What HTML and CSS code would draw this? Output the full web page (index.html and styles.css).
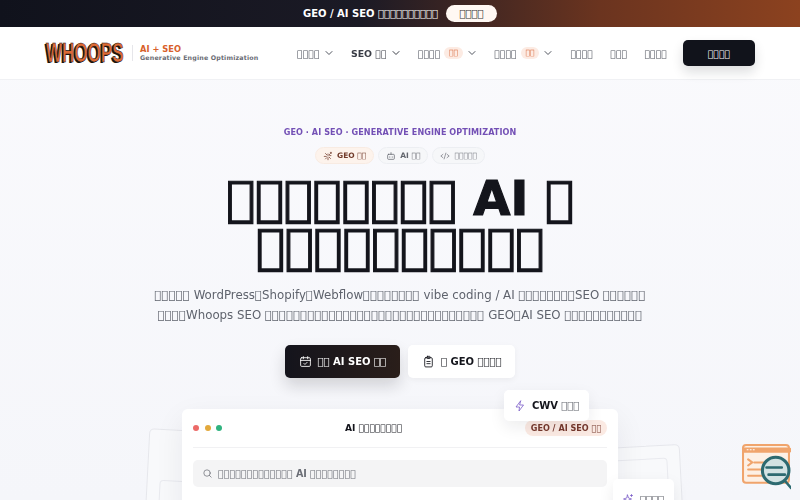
FILE: index.html
```html
<!DOCTYPE html>
<html lang="zh-Hant">
<head>
  <meta charset="UTF-8">
  <title>Whoops SEO</title>
  <link rel="stylesheet" href="styles.css">
</head>
<body>

  <div class="promo">
    <span class="promo-text">GEO / AI SEO &#xE000;&#xE000;&#xE000;&#xE000;&#xE000;&#xE000;&#xE000;&#xE000;&#xE000;&#xE000;</span>
    <span class="promo-btn">&#xE000;&#xE000;&#xE000;&#xE000;</span>
  </div>

  <header class="site-header">
    <div class="brand">
      <div class="wordmark-box"><span class="wordmark">WHOOPS</span></div>
      <span class="brand-line"></span>
      <div class="brand-text">
        <div class="brand-top">AI + SEO</div>
        <div class="brand-sub">Generative Engine Optimization</div>
      </div>
    </div>
    <nav class="main-nav">
      <a>&#xE000;&#xE000;&#xE000;&#xE000;<svg class="chev" viewBox="0 0 10 10"><path d="M2 3.5 5 6.5 8 3.5"/></svg></a>
      <a class="active">SEO &#xE000;&#xE000;<svg class="chev" viewBox="0 0 10 10"><path d="M2 3.5 5 6.5 8 3.5"/></svg></a>
      <a>&#xE000;&#xE000;&#xE000;&#xE000;<span class="tag">&#xE000;&#xE000;</span><svg class="chev" viewBox="0 0 10 10"><path d="M2 3.5 5 6.5 8 3.5"/></svg></a>
      <a>&#xE000;&#xE000;&#xE000;&#xE000;<span class="tag">&#xE000;&#xE000;</span><svg class="chev" viewBox="0 0 10 10"><path d="M2 3.5 5 6.5 8 3.5"/></svg></a>
      <a>&#xE000;&#xE000;&#xE000;&#xE000;</a>
      <a>&#xE000;&#xE000;&#xE000;</a>
      <a>&#xE000;&#xE000;&#xE000;&#xE000;</a>
    </nav>
    <a class="cta">&#xE000;&#xE000;&#xE000;&#xE000;</a>
  </header>

  <main class="hero">
    <div class="eyebrow">GEO · AI SEO · Generative Engine Optimization</div>

    <div class="pills">
      <span class="pill pill-geo">
        <svg viewBox="0 0 24 24"><path d="M12 7v5M12 16v5M3 13h5M16 11h3M6 6l3 3M15 15l3 3M15 9l2-2M9 16l-3 3M19 3v3M17.5 4.5h3"/></svg>
        <span>GEO &#xE000;&#xE000;</span>
      </span>
      <span class="pill">
        <svg viewBox="0 0 24 24"><rect x="4" y="8" width="16" height="12" rx="2"/><path d="M12 8V4M9 14v1M15 14v1"/></svg>
        <span>AI &#xE000;&#xE000;</span>
      </span>
      <span class="pill pill-light">
        <svg viewBox="0 0 24 24"><path d="M7 8l-5 4 5 4M17 8l5 4-5 4M14 5l-4 14"/></svg>
        <span>&#xE000;&#xE000;&#xE000;&#xE000;&#xE000;</span>
      </span>
    </div>

    <h1>&#xE000;&#xE000;&#xE000;&#xE000;&#xE000;&#xE000;&#xE000;&#xE000; AI &#xE000;<br>&#xE000;&#xE000;&#xE000;&#xE000;&#xE000;&#xE000;&#xE000;&#xE000;&#xE000;&#xE000;</h1>

    <p class="lead">&#xE000;&#xE000;&#xE000;&#xE000;&#xE000; WordPress&#xE000;Shopify&#xE000;Webflow&#xE000;&#xE000;&#xE000;&#xE000;&#xE000;&#xE000;&#xE000;&#xE000; vibe coding / AI &#xE000;&#xE000;&#xE000;&#xE000;&#xE000;&#xE000;&#xE000;&#xE000;SEO &#xE000;&#xE000;&#xE000;&#xE000;&#xE000;&#xE000;<br>&#xE000;&#xE000;&#xE000;&#xE000;Whoops SEO &#xE000;&#xE000;&#xE000;&#xE000;&#xE000;&#xE000;&#xE000;&#xE000;&#xE000;&#xE000;&#xE000;&#xE000;&#xE000;&#xE000;&#xE000;&#xE000;&#xE000;&#xE000;&#xE000;&#xE000;&#xE000;&#xE000;&#xE000;&#xE000;&#xE000;&#xE000;&#xE000;&#xE000;&#xE000;&#xE000;&#xE000; GEO&#xE000;AI SEO &#xE000;&#xE000;&#xE000;&#xE000;&#xE000;&#xE000;&#xE000;&#xE000;&#xE000;&#xE000;&#xE000;</p>

    <div class="actions">
      <a class="btn btn-dark">
        <svg viewBox="0 0 24 24"><rect x="3" y="5" width="18" height="16" rx="2"/><path d="M8 3v4M16 3v4M3 10h18M9 15.5l2 2 4-4"/></svg>
        <span>&#xE000;&#xE000; AI SEO &#xE000;&#xE000;</span>
      </a>
      <a class="btn btn-white">
        <svg viewBox="0 0 24 24"><rect x="5" y="5" width="14" height="17" rx="2"/><rect x="9" y="2.5" width="6" height="4" rx="1"/><path d="M9 12h6M9 16h6"/></svg>
        <span>&#xE000; GEO &#xE000;&#xE000;&#xE000;&#xE000;</span>
      </a>
    </div>

    <div class="stage">
      <div class="ghost ghost-left"><div class="ghost-inner"></div></div>
      <div class="ghost ghost-right"><div class="ghost-inner"></div></div>

      <section class="window">
        <div class="window-bar">
          <div class="dots"><i class="red"></i><i class="amber"></i><i class="green"></i></div>
          <div class="window-title">AI &#xE000;&#xE000;&#xE000;&#xE000;&#xE000;&#xE000;&#xE000;&#xE000;</div>
          <span class="window-badge">GEO / AI SEO &#xE000;&#xE000;</span>
        </div>
        <div class="search">
          <svg viewBox="0 0 24 24"><circle cx="11" cy="11" r="7"/><path d="M20 20l-4-4"/></svg>
          <span>&#xE000;&#xE000;&#xE000;&#xE000;&#xE000;&#xE000;&#xE000;&#xE000;&#xE000;&#xE000;&#xE000;&#xE000;&#xE000; <b>AI</b> &#xE000;&#xE000;&#xE000;&#xE000;&#xE000;&#xE000;&#xE000;&#xE000;</span>
        </div>
      </section>

      <div class="float-card float-cwv">
        <svg viewBox="0 0 24 24"><path d="M13 2 4 14h7l-1 8 9-12h-7z"/></svg>
        <span><b>CWV</b> <span class="muted">&#xE000;&#xE000;&#xE000;</span></span>
      </div>
      <div class="float-card float-spark">
        <svg viewBox="0 0 24 24"><path d="M11 4l2 6 6 2-6 2-2 6-2-6-6-2 6-2zM19 3v4M17 5h4"/></svg>
        <span class="muted">&#xE000;&#xE000;&#xE000;&#xE000;</span>
      </div>
    </div>
  </main>

  <div class="corner-widget">
    <svg viewBox="0 0 48 46">
      <rect x="1" y="1" width="45" height="37" rx="3" fill="#fdf0e5" stroke="#f0a46c" stroke-width="2"/>
      <path d="M1 6h45" stroke="#f0a46c" stroke-width="5"/>
      <path d="M5 5.500h1M8 5.500h1M11 5.500h1" stroke="#fff" stroke-width="1"/>
      <path d="M6 15l4 3-4 3M12 18h12M6 25h18M6 31h16" fill="none" stroke="#f0a46c" stroke-width="2"/>
      <circle cx="33" cy="26" r="13" fill="#d3e3e3" stroke="#2d6a70" stroke-width="3"/>
      <path d="M24 23h15M26 30h16M42 36l6 7" fill="none" stroke="#2d6a70" stroke-width="2.5"/>
    </svg>
  </div>

</body>
</html>
```

FILE: styles.css
```css
* {
  box-sizing: border-box;
}

html, body {
  height: 500px;
  overflow: hidden;
}

body {
  margin: 0;
  font-family: "DejaVu Sans", sans-serif;
  background: linear-gradient(180deg, #fafafd 0%, #f5f6fa 100%);
  color: #14151c;
  filter: blur(0.3px);
}

svg {
  fill: none;
  stroke: currentColor;
  stroke-width: 2;
  stroke-linecap: round;
  stroke-linejoin: round;
  flex: none;
}

.promo {
  height: 27px;
  display: flex;
  align-items: center;
  justify-content: center;
  gap: 8px;
  background: linear-gradient(90deg, #10121c 0%, #1b1a25 45%, #6b341f 75%, #8c421f 100%);
}

.promo-text {
  color: #fff;
  font-size: 10px;
  font-weight: 700;
}

.promo-btn {
  width: 51px;
  height: 17px;
  display: flex;
  align-items: center;
  justify-content: center;
  background: #fff8f3;
  border-radius: 9px;
  font-size: 10px;
  color: #333;
}

.site-header {
  height: 53px;
  display: flex;
  align-items: center;
  padding: 0 45px;
  background: #fff;
  border-bottom: 1px solid #f0f1f4;
}

.brand {
  display: flex;
  align-items: center;
}

.wordmark-box {
  width: 79px;
  height: 20px;
  padding-left: 1px;
}

.wordmark {
  display: inline-block;
  font-family: "Liberation Sans", sans-serif;
  font-size: 27px;
  line-height: 20px;
  font-weight: 700;
  color: #dd6a35;
  -webkit-text-stroke: 0.6px #17120f;
  text-shadow: -2.5px 0.5px 0 #17120f;
  transform: scaleX(0.63);
  transform-origin: left center;
}

.brand-line {
  width: 1px;
  height: 16px;
  margin: 0 7px 0 8px;
  background: #e6e6ea;
}

.brand-top {
  font-size: 8.3px;
  line-height: 9px;
  font-weight: 700;
  color: #d8602a;
}

.brand-sub {
  font-size: 6.3px;
  line-height: 8px;
  font-weight: 700;
  color: #6a6c74;
  letter-spacing: 0.17px;
}

.main-nav {
  display: flex;
  align-items: center;
  gap: 17.3px;
  margin-left: auto;
  font-size: 9.4px;
  color: #50545e;
  will-change: opacity;
}

.main-nav a {
  display: flex;
  align-items: center;
}

.main-nav .active {
  font-weight: 700;
  color: #3a3d46;
}

.chev {
  width: 10px;
  height: 10px;
  margin-left: 4px;
  stroke-width: 1;
}

.tag {
  margin-left: 4px;
  height: 12px;
  line-height: 12px;
  padding: 0 4.75px;
  border-radius: 6px;
  background: #fcebe3;
  color: #d9673a;
  font-size: 7.5px;
}

.cta {
  width: 72px;
  height: 26px;
  margin-left: 16px;
  display: flex;
  align-items: center;
  justify-content: center;
  background: #11131b;
  color: #fff;
  font-size: 9.4px;
  border-radius: 5px;
  box-shadow: 0 6px 12px rgba(17, 19, 27, 0.14);
}

.hero {
  height: 420px;
  overflow: hidden;
  display: flex;
  flex-direction: column;
  align-items: center;
  padding-top: 47px;
}

.eyebrow {
  font-size: 8.1px;
  line-height: 10px;
  font-weight: 700;
  text-transform: uppercase;
  letter-spacing: 0.07px;
  color: #7350b5;
}

.pills {
  display: flex;
  gap: 4px;
  margin-top: 10px;
}

.pill {
  height: 17px;
  display: flex;
  align-items: center;
  gap: 4px;
  padding: 0 7px;
  border: 1px solid #eceef2;
  border-radius: 9px;
  background: #f6f7f9;
  color: #63666e;
  font-size: 7.5px;
  font-weight: 700;
}

.pill svg {
  width: 10px;
  height: 10px;
  stroke-width: 1.8;
}

.pill-geo {
  background: #fdf3ec;
  border-color: #f8ebe2;
  color: #713a2a;
}

.pill-light {
  font-weight: 400;
  color: #7a7c84;
}

h1 {
  margin: 10px 0 0;
  font-size: 48px;
  line-height: 48px;
  font-weight: 800;
  text-align: center;
  color: #14151c;
  -webkit-text-stroke: 1.2px #14151c;
}

.lead {
  margin: 15px 0 0;
  font-size: 11.8px;
  line-height: 20px;
  text-align: center;
  color: #5f636d;
  white-space: nowrap;
}

.actions {
  display: flex;
  gap: 8px;
  margin-top: 20px;
}

.btn {
  height: 33px;
  display: flex;
  align-items: center;
  gap: 6px;
  padding: 0 14px;
  border-radius: 5px;
  font-size: 10px;
  font-weight: 700;
  white-space: nowrap;
}

.btn svg {
  width: 13px;
  height: 13px;
  stroke-width: 1.6;
}

.btn-dark {
  background: linear-gradient(90deg, #14141c, #2a1e1a);
  color: #fff;
  box-shadow: 0 8px 16px rgba(17, 19, 27, 0.16);
}

.btn-white {
  background: #fff;
  color: #14151c;
  box-shadow: 0 2px 6px rgba(17, 19, 27, 0.05);
}

.stage {
  position: relative;
  width: 436px;
  margin-top: 31px;
}

.ghost {
  position: absolute;
  top: 21px;
  width: 70px;
  height: 90px;
  border: 1px solid #e6e7ec;
  border-radius: 5px;
  background: #f8f9fb;
}

.ghost-left {
  left: -35px;
  transform: rotate(3deg);
}

.ghost-right {
  right: -64px;
  width: 80px;
  top: 37px;
  transform: rotate(-3deg);
}

.ghost-inner {
  margin: 12px 12px;
  height: 70px;
  border: 1px solid #e9eaef;
  border-radius: 4px;
}

.ghost-left .ghost-inner {
  margin-top: 50px;
}

.window {
  position: relative;
  height: 110px;
  padding: 0 11px;
  background: #fff;
  border-radius: 6px;
  box-shadow: 0 10px 30px rgba(20, 22, 40, 0.07);
}

.window-bar {
  height: 39px;
  display: flex;
  align-items: center;
  justify-content: space-between;
  border-bottom: 1px solid #f1f1f3;
}

.dots {
  display: flex;
  gap: 5.5px;
}

.dots i {
  width: 6px;
  height: 6px;
  border-radius: 50%;
}

.red { background: #ec6a68; }
.amber { background: #e3a93c; }
.green { background: #2fb37f; }

.window-title {
  font-size: 9.1px;
  font-weight: 700;
}

.window-badge {
  height: 16px;
  width: 82px;
  display: flex;
  align-items: center;
  justify-content: center;
  background: #fbeae3;
  border-radius: 8px;
  font-size: 8.1px;
  font-weight: 700;
  color: #76382c;
  white-space: nowrap;
}

.search {
  height: 27px;
  margin-top: 12px;
  display: flex;
  align-items: center;
  gap: 5px;
  padding-left: 9px;
  background: #f4f4f5;
  border-radius: 5px;
  color: #6b6e76;
  font-size: 9.6px;
  white-space: nowrap;
}

.search svg {
  width: 11px;
  height: 11px;
  stroke-width: 1.6;
}

.float-card {
  position: absolute;
  display: flex;
  align-items: center;
  gap: 6px;
  background: #fff;
  border-radius: 5px;
  font-size: 10px;
  box-shadow: 0 6px 16px rgba(20, 22, 40, 0.08);
  white-space: nowrap;
}

.float-card svg {
  width: 12px;
  height: 12px;
  color: #7a5cc8;
  stroke-width: 1.6;
}

.muted {
  color: #63666e;
}

.float-cwv {
  top: -19px;
  left: 322px;
  width: 85px;
  height: 31px;
  padding-left: 10px;
}

.float-spark {
  top: 70px;
  left: 431px;
  width: 61px;
  height: 40px;
  padding-left: 9px;
}

.corner-widget {
  position: fixed;
  right: 9px;
  bottom: 9px;
  width: 49px;
  height: 47px;
}

.corner-widget svg {
  width: 100%;
  height: 100%;
  stroke: none;
}
```
